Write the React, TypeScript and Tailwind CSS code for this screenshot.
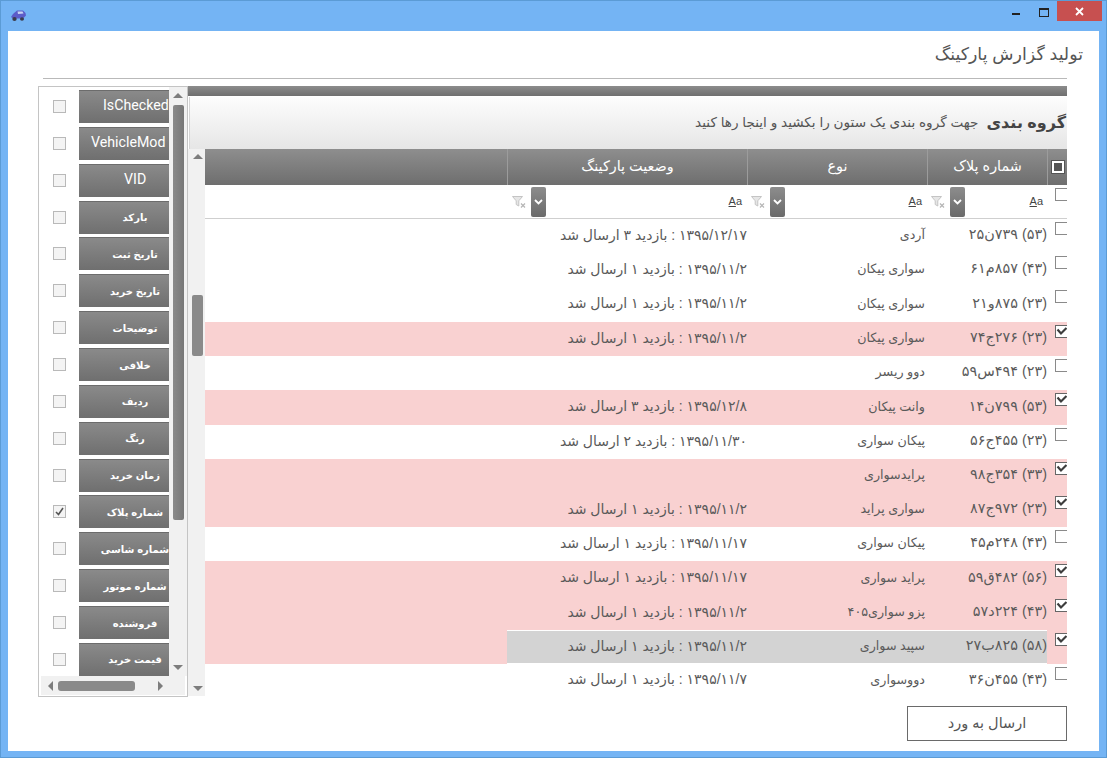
import React from "react";

const font = "font-['Liberation_Sans','DejaVu_Sans',sans-serif]";

const rows = [
  { p: "(۵۳) ۷۳۹ن۲۵", t: "آردی", s: "۱۳۹۵/۱۲/۱۷ : بازدید ۳ ارسال شد", pink: false, c: false, h: "h-[34px]" },
  { p: "(۴۳) ۸۵۷م۶۱", t: "سواری پیکان", s: "۱۳۹۵/۱۱/۲ : بازدید ۱ ارسال شد", pink: false, c: false, h: "h-[34px]" },
  { p: "(۲۳) ۸۷۵و۲۱", t: "سواری پیکان", s: "۱۳۹۵/۱۱/۲ : بازدید ۱ ارسال شد", pink: false, c: false, h: "h-[35px]" },
  { p: "(۲۳) ۲۷۶ج۷۴", t: "سواری پیکان", s: "۱۳۹۵/۱۱/۲ : بازدید ۱ ارسال شد", pink: true, c: true, h: "h-[34px]" },
  { p: "(۲۳) ۴۹۴س۵۹", t: "دوو ریسر", s: "", pink: false, c: false, h: "h-[34px]" },
  { p: "(۵۳) ۷۹۹ن۱۴", t: "وانت پیکان", s: "۱۳۹۵/۱۲/۸ : بازدید ۳ ارسال شد", pink: true, c: true, h: "h-[35px]" },
  { p: "(۲۳) ۴۵۵ج۵۶", t: "پیکان سواری", s: "۱۳۹۵/۱۱/۳۰ : بازدید ۲ ارسال شد", pink: false, c: false, h: "h-[34px]" },
  { p: "(۳۳) ۳۵۴ج۹۸", t: "پرایدسواری", s: "", pink: true, c: true, h: "h-[34px]" },
  { p: "(۲۳) ۹۷۲ج۸۷", t: "سواری پراید", s: "۱۳۹۵/۱۱/۲ : بازدید ۱ ارسال شد", pink: true, c: true, h: "h-[34px]" },
  { p: "(۴۳) ۲۴۸م۴۵", t: "پیکان سواری", s: "۱۳۹۵/۱۱/۱۷ : بازدید ۱ ارسال شد", pink: false, c: false, h: "h-[34px]" },
  { p: "(۵۶) ۴۸۲ق۵۹", t: "پراید سواری", s: "۱۳۹۵/۱۱/۱۷ : بازدید ۱ ارسال شد", pink: true, c: true, h: "h-[35px]" },
  { p: "(۴۳) ۲۲۴د۵۷", t: "پزو سواری۴۰۵", s: "۱۳۹۵/۱۱/۲ : بازدید ۱ ارسال شد", pink: true, c: true, h: "h-[34px]" },
  { p: "(۵۸) ۸۲۵ب۲۷", t: "سپید سواری", s: "۱۳۹۵/۱۱/۲ : بازدید ۱ ارسال شد", pink: true, c: true, sel: true, h: "h-[34px]" },
  { p: "(۴۳) ۴۵۵ن۳۶", t: "دووسواری", s: "۱۳۹۵/۱۱/۷ : بازدید ۱ ارسال شد", pink: false, c: false, h: "h-[33px]" },
];

const fields = [
  "IsChecked", "VehicleMod", "VID", "بارکد", "تاریخ ثبت", "تاریخ خرید", "توضیحات", "خلافی", "ردیف", "رنگ",
  "زمان خرید", "شماره پلاک", "شماره شاسی", "شماره موتور", "فروشنده", "قیمت خرید",
];

const latinPad = ["pl-[24px]", "pl-[12px]", "pl-[45px]"];

function Tri({ d }: { d: "up" | "down" | "left" | "right" }) {
  const pts = { up: "0,5 5,0 10,5", down: "0,0 10,0 5,5", left: "5,0 5,10 0,5", right: "0,0 5,5 0,10" }[d];
  const box = d === "up" || d === "down" ? "0 0 10 5" : "0 0 5 10";
  const w = d === "up" || d === "down" ? 10 : 5;
  const h = d === "up" || d === "down" ? 5 : 10;
  return (
    <svg width={w} height={h} viewBox={box} className="shrink-0">
      <polygon points={pts} fill="#7d7d7d" />
    </svg>
  );
}

function GridCheck({ on }: { on: boolean }) {
  return (
    <div className="w-[20px] h-full shrink-0 pl-[8px] pt-[3px]">
      <div className={`w-[12px] h-[13px] border-t border-l border-b bg-white ${on ? "border-[#666]" : "border-[#8a8a8a]"} overflow-hidden`}>
        {on && (
          <svg width="12" height="11" viewBox="0 0 12 11">
            <path d="M1.5 3.5 L5 7.5 L10.5 2" stroke="#3d3d3d" strokeWidth="2.2" fill="none" />
          </svg>
        )}
      </div>
    </div>
  );
}

function FilterIcon() {
  return (
    <svg width="14" height="12" viewBox="0 0 14 12" className="shrink-0">
      <path d="M0.5 0.5 H10.5 L6.8 4.8 V10 L4.2 8.5 V4.8 Z" fill="#e6e6e6" stroke="#c4c4c4" />
      <path d="M9 7.5 L13 11.5 M13 7.5 L9 11.5" stroke="#b5b5b5" strokeWidth="1.2" />
    </svg>
  );
}

function DropBtn() {
  return (
    <div className="w-[15px] h-[30px] rounded-[2px] bg-gradient-to-b from-[#8d8d8d] to-[#6a6a6a] flex items-center justify-center shrink-0">
      <svg width="9" height="6" viewBox="0 0 9 6">
        <path d="M1 1 L4.5 4.5 L8 1" stroke="#fff" strokeWidth="1.8" fill="none" />
      </svg>
    </div>
  );
}

function Aa() {
  return (
    <span className="text-[11px] leading-none text-[#444] font-['Liberation_Sans',sans-serif]">
      <span className="underline">A</span>a
    </span>
  );
}

function FilterCell({ w, pl, pr }: { w: string; pl: string; pr: string }) {
  return (
    <div className={`${w} ${pl} ${pr} shrink-0 h-full flex items-center justify-between`}>
      <div className="flex items-center gap-[5px]">
        <FilterIcon />
        <DropBtn />
      </div>
      <Aa />
    </div>
  );
}

function HeadCell({ w, text }: { w: string; text: string }) {
  return (
    <div className={`${w} shrink-0 h-full border-l border-[#9c9c9c] flex items-center justify-center text-white text-[14.4px]`} dir="rtl">
      {text}
    </div>
  );
}

export default function App() {
  return (
    <div className={`w-[1107px] h-[758px] bg-[#74b4f4] border border-[#5b9bd5] flex flex-col overflow-hidden ${font}`}>
      {/* title bar */}
      <div className="h-[30px] shrink-0 flex items-start justify-between pl-[9px] pr-[4px]">
        <svg width="17" height="13" viewBox="0 0 17 13" className="mt-[8px]">
          <path d="M1 8 L3 5 L7 1.5 H13 L15.5 4 L16 6.5 L13 9.5 H3 Z" fill="#5c5cc8" />
          <path d="M7.5 2.5 H12.5 L13.5 4.5 L8 5 Z" fill="#c9d4f2" />
          <ellipse cx="4.5" cy="10" rx="2.2" ry="2" fill="#3c3c4c" />
          <ellipse cx="12" cy="10" rx="2" ry="1.8" fill="#3c3c4c" />
        </svg>
        <div className="flex items-start h-[20px]">
          <div className="w-[8px] h-[2px] bg-[#222] mt-[12px] mr-[19px]" />
          <div className="w-[10px] h-[9px] border border-[#222] border-t-2 mt-[7px] mr-[8px]" />
          <div className="w-[45px] h-[20px] bg-[#c75050] flex items-center justify-center">
            <svg width="9" height="9" viewBox="0 0 9 9">
              <path d="M1 1 L8 8 M8 1 L1 8" stroke="#fff" strokeWidth="1.8" />
            </svg>
          </div>
        </div>
      </div>

      {/* content */}
      <div className="ml-[7px] mr-[7px] mb-[6px] h-[720px] bg-white pl-[30px] pr-[32px] flex flex-col">
        <div className="h-[48px] shrink-0 flex flex-col">
          <div className="flex-1 flex items-center justify-end -mr-[16px]">
            <div dir="rtl" className="text-[17.4px] text-[#555]">تولید گزارش پارکینگ</div>
          </div>
          <div className="h-px ml-[5px] bg-[#b9b9b9]" />
        </div>

        <div className="mt-[7px] h-[611px] shrink-0 flex">
          {/* field chooser */}
          <div className="w-[150px] h-full shrink-0 border border-[#c4c4c4] flex flex-col">
            <div className="flex h-[589px] overflow-hidden">
              <div className="w-[130px] shrink-0 overflow-hidden pt-[3px] flex flex-col gap-[3.87px]">
                {fields.map((f, i) => (
                  <div key={f} className="h-[33px] shrink-0 flex items-center">
                    <div className="w-[13px] h-[13px] ml-[14px] mr-[13px] border border-[#b9b9b9] bg-[#f4f4f4] flex items-center justify-center shrink-0">
                      {i === 11 && (
                        <svg width="9" height="9" viewBox="0 0 9 9">
                          <path d="M1 5 L3.5 7.5 L8 1" stroke="#555" strokeWidth="1.6" fill="none" />
                        </svg>
                      )}
                    </div>
                    {i < 3 ? (
                      <div className={`w-[90px] h-[33px] shrink-0 overflow-hidden bg-gradient-to-b from-[#8a8a8a] to-[#6f6f6f] border-t border-[#6c6c6c] flex items-center whitespace-nowrap text-white text-[14.2px] pb-[2px] font-['Roboto',sans-serif] ${latinPad[i]}`}>
                        {f}
                      </div>
                    ) : (
                      <div dir="rtl" className="w-[90px] h-[33px] shrink-0 overflow-hidden bg-gradient-to-b from-[#8a8a8a] to-[#6f6f6f] border-t border-[#6c6c6c] flex items-center justify-center whitespace-nowrap text-white text-[10px] font-bold pl-[22px]">
                        {f}
                      </div>
                    )}
                  </div>
                ))}
              </div>
              <div className="w-[18px] h-full bg-[#f1f1f1] flex flex-col items-center pt-[6px]">
                <Tri d="up" />
                <div className="w-[11px] h-[415px] mt-[7px] bg-gradient-to-r from-[#8a8a8a] to-[#777] rounded-[2px] shrink-0" />
                <div className="flex-1" />
                <div className="mb-[6px]"><Tri d="down" /></div>
              </div>
            </div>
            <div className="h-[19px] mx-[2px] bg-[#f1f1f1] flex items-center pl-[7px] pr-[22px]">
              <Tri d="left" />
              <div className="w-[77px] h-[10px] ml-[5px] rounded-[3px] bg-[#8a8a8a]" />
              <div className="flex-1" />
              <Tri d="right" />
            </div>
          </div>

          {/* grid */}
          <div className="flex-1 min-w-0 flex flex-col">
            <div className="h-[10px] shrink-0 bg-gradient-to-b from-[#8c8c8c] to-[#6f6f6f]" />
            <div className="h-[52px] shrink-0 mt-px ml-px border-l border-[#d5d5d5] bg-gradient-to-b from-[#fdfdfd] to-[#e6e6e6] flex items-center overflow-hidden pr-px" dir="rtl">
              <span className="text-[16px] font-bold text-[#444] ml-[8px] whitespace-nowrap">گروه بندی</span>
              <span className="text-[13.6px] text-[#555] whitespace-nowrap">جهت گروه بندی یک ستون را بکشید و اینجا رها کنید</span>
            </div>
            <div className="flex-1 min-h-0 flex">
              {/* vertical scroll */}
              <div className="w-[17px] shrink-0 h-[547px] bg-[#f1f1f1] flex flex-col items-center pt-[5px] pl-[2px]">
                <Tri d="up" />
                <div className="w-[11px] h-[61px] mt-[136px] bg-[#8a8a8a] rounded-[2px] shrink-0" />
                <div className="flex-1" />
                <div className="mb-[5px]"><Tri d="down" /></div>
              </div>
              {/* table */}
              <div className="flex-1 min-w-0 flex flex-col">
                <div className="h-[36px] shrink-0 flex bg-gradient-to-b from-[#8e8e8e] to-[#6e6e6e]">
                  <div className="flex-1" />
                  <HeadCell w="w-[240px]" text="وضعیت پارکینگ" />
                  <HeadCell w="w-[180px]" text="نوع" />
                  <HeadCell w="w-[120px]" text="شماره پلاک" />
                  <div className="w-[20px] shrink-0 h-full border-l border-[#9c9c9c] flex items-center justify-center">
                    <div className="w-[12px] h-[12px] bg-[#555] border-2 border-white outline-1 outline-[#555]" />
                  </div>
                </div>
                <div className="h-[34px] shrink-0 flex border-b border-[#cfcfcf]">
                  <div className="flex-1" />
                  <FilterCell w="w-[240px]" pl="pl-[5px]" pr="pr-[5px]" />
                  <FilterCell w="w-[180px]" pl="pl-[4px]" pr="pr-[5px]" />
                  <FilterCell w="w-[120px]" pl="pl-[4px]" pr="pr-[4px]" />
                  <GridCheck on={false} />
                </div>
                {rows.map((r, i) => (
                  <div key={i} dir="ltr" className={`${r.h} shrink-0 flex text-[#5a5a5a] ${r.pink ? "bg-[#f9d1d1]" : "bg-white"}`}>
                    <div className="flex-1" />
                    <div className={`flex h-full ${r.sel ? "bg-[#d3d3d3] border-y border-white" : ""}`}>
                      <div dir="rtl" className="w-[240px] h-full flex items-center pb-[2px] whitespace-nowrap text-[14px]">{r.s}</div>
                      <div dir="rtl" className="w-[180px] h-full flex items-center pr-[2px] whitespace-nowrap text-[12.7px]">{r.t}</div>
                      <div dir="rtl" className="w-[120px] h-full flex items-center pb-[2px] whitespace-nowrap text-[14.4px]">{r.p}</div>
                    </div>
                    <GridCheck on={r.c} />
                  </div>
                ))}
              </div>
            </div>
          </div>
        </div>

        <div className="flex justify-end mt-[9px]">
          <div dir="rtl" className="w-[160px] h-[35px] border border-[#6a6a6a] bg-white flex items-center justify-center text-[14.5px] text-[#555]">
            ارسال به ورد
          </div>
        </div>
      </div>
    </div>
  );
}
